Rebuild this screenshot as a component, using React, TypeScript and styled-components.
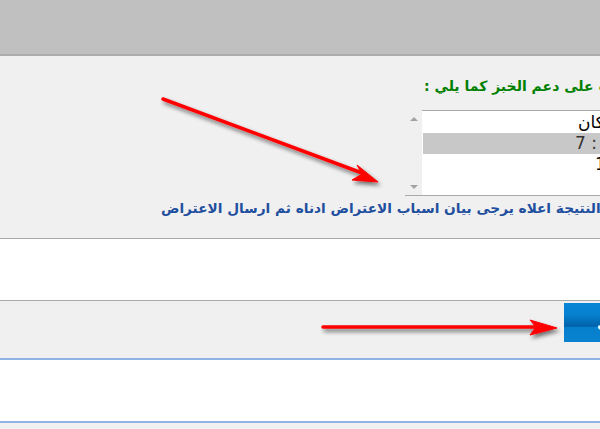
import styled, { createGlobalStyle } from 'styled-components';

const GlobalStyle = createGlobalStyle`
  html, body {
    margin: 0;
    padding: 0;
    width: 600px;
    height: 429px;
    overflow: hidden;
    background: #f0f0f0;
    font-family: 'DejaVu Sans', sans-serif;
  }
`;

const Page = styled.div`
  position: relative;
  width: 800px;
  direction: rtl;
`;

const TopBar = styled.div`
  height: 54px;
  background: #c0c0c0;
  border-bottom: 2px solid #acacac;
`;

const ResultSection = styled.div`
  height: 183px;
  padding-top: 20px;
  box-sizing: border-box;
  background: #f0f0f0;
  border-bottom: 1px solid #a9a9a9;
`;

// anchors a line of text by its left end (the part that shows)
const LeftAnchored = styled.div<{ $left: number }>`
  display: flex;
  justify-content: flex-end;
  padding-left: ${(p) => p.$left}px;
  white-space: nowrap;
`;

const Title = styled.span`
  font-size: 14px;
  font-weight: bold;
  color: #008000;
  line-height: 20px;
`;

const Note = styled.span`
  font-size: 13.7px;
  font-weight: bold;
  color: #1f4f9e;
  line-height: 20px;
`;

const ListBox = styled.div`
  display: flex;
  margin: 14px 0 0 0;
  padding-left: 405px;
  height: 86px;
`;

const ListArea = styled.div`
  flex: 1;
  display: flex;
  flex-direction: column;
  padding: 1px 1px 0 1px;
  background: #fff;
  border-top: 1px solid #a9a9a9;
  border-bottom: 1px solid #a9a9a9;
`;

const Row = styled(LeftAnchored)<{ $selected?: boolean }>`
  height: 21px;
  line-height: 21px;
  font-size: 17px;
  padding-left: ${(p) => p.$left - 423}px;
  background: ${(p) => (p.$selected ? '#c8c8c8' : 'transparent')};
  color: ${(p) => (p.$selected ? '#333' : '#000')};
`;

const ScrollBar = styled.div`
  order: 2;
  width: 17px;
  display: flex;
  flex-direction: column;
  justify-content: space-between;
  align-items: center;
  padding: 7px 0 6px;
  box-sizing: border-box;
  border-bottom: 1px solid #a9a9a9;
`;

const Triangle = styled.div<{ $down?: boolean }>`
  width: 0;
  height: 0;
  border-left: 4px solid transparent;
  border-right: 4px solid transparent;
  ${(p) =>
    p.$down ? 'border-top: 4px solid #a3a3a3;' : 'border-bottom: 4px solid #a3a3a3;'}
`;

const NoteLine = styled(LeftAnchored)`
  margin-top: 2px;
`;

const WhiteBlock = styled.div`
  height: 62px;
  box-sizing: border-box;
  background: #fff;
  border-bottom: 1px solid #a9a9a9;
`;

const ActionRow = styled.div`
  height: 59px;
  box-sizing: border-box;
  padding: 2px 0 0 564px;
  display: flex;
  justify-content: flex-end;
  align-items: flex-start;
  background: #f0f0f0;
  border-bottom: 2px solid #8fb3e6;
`;

const SubmitButton = styled.button`
  height: 39px;
  width: 120px;
  border: none;
  padding: 0 0 0 33px;
  text-align: left;
  direction: rtl;
  color: #fff;
  font-family: 'DejaVu Sans', sans-serif;
  font-weight: bold;
  font-size: 14px;
  background: linear-gradient(
    to bottom,
    #0a86d8 0%,
    #0680cf 30%,
    #0062aa 60%,
    #0580cc 62%,
    #0a82d0 100%
  );
`;

const BlueBlock = styled.div`
  height: 63px;
  box-sizing: border-box;
  background: #fff;
  border-bottom: 2px solid #8fb3e6;
`;

const Overlay = styled.svg`
  position: absolute;
  top: 0;
  left: 0;
  width: 600px;
  height: 429px;
  pointer-events: none;
`;

function Arrows() {
  return (
    <Overlay viewBox="0 0 600 429">
      <defs>
        <filter id="shadow" x="-20%" y="-50%" width="140%" height="200%">
          <feGaussianBlur in="SourceAlpha" stdDeviation="2" />
          <feOffset dx="2" dy="3" result="b" />
          <feComponentTransfer>
            <feFuncA type="linear" slope="0.55" />
          </feComponentTransfer>
          <feMerge>
            <feMergeNode />
            <feMergeNode in="SourceGraphic" />
          </feMerge>
        </filter>
      </defs>
      <g filter="url(#shadow)" fill="#ff0000" stroke="#ff0000">
        <line x1="163" y1="99" x2="362" y2="173" strokeWidth="3.5" strokeLinecap="round" />
        <polygon points="378,182 357,165 362,174 352,180" strokeWidth="1" strokeLinejoin="round" />
        <line x1="323" y1="327" x2="536" y2="327" strokeWidth="3.5" strokeLinecap="round" />
        <polygon points="557,328 530,320 536,327 530,335" strokeWidth="1" strokeLinejoin="round" />
      </g>
    </Overlay>
  );
}

export default function App() {
  return (
    <>
      <GlobalStyle />
      <Page>
        <TopBar />
        <ResultSection>
          <LeftAnchored $left={424}>
            <Title>نتيجة الطلب على دعم الخبز كما يلي :</Title>
          </LeftAnchored>
          <ListBox>
            <ListArea>
              <Row $left={578}>عدد السكان</Row>
              <Row $left={575} $selected>النصيب : 7</Row>
              <Row $left={595}>الرقم : 1</Row>
            </ListArea>
            <ScrollBar>
              <Triangle />
              <Triangle $down />
            </ScrollBar>
          </ListBox>
          <NoteLine $left={161}>
            <Note>النتيجة اعلاه يرجى بيان اسباب الاعتراض ادناه ثم ارسال الاعتراض</Note>
          </NoteLine>
        </ResultSection>
        <WhiteBlock />
        <ActionRow>
          <SubmitButton>ارسال</SubmitButton>
        </ActionRow>
        <BlueBlock />
        <Arrows />
      </Page>
    </>
  );
}
